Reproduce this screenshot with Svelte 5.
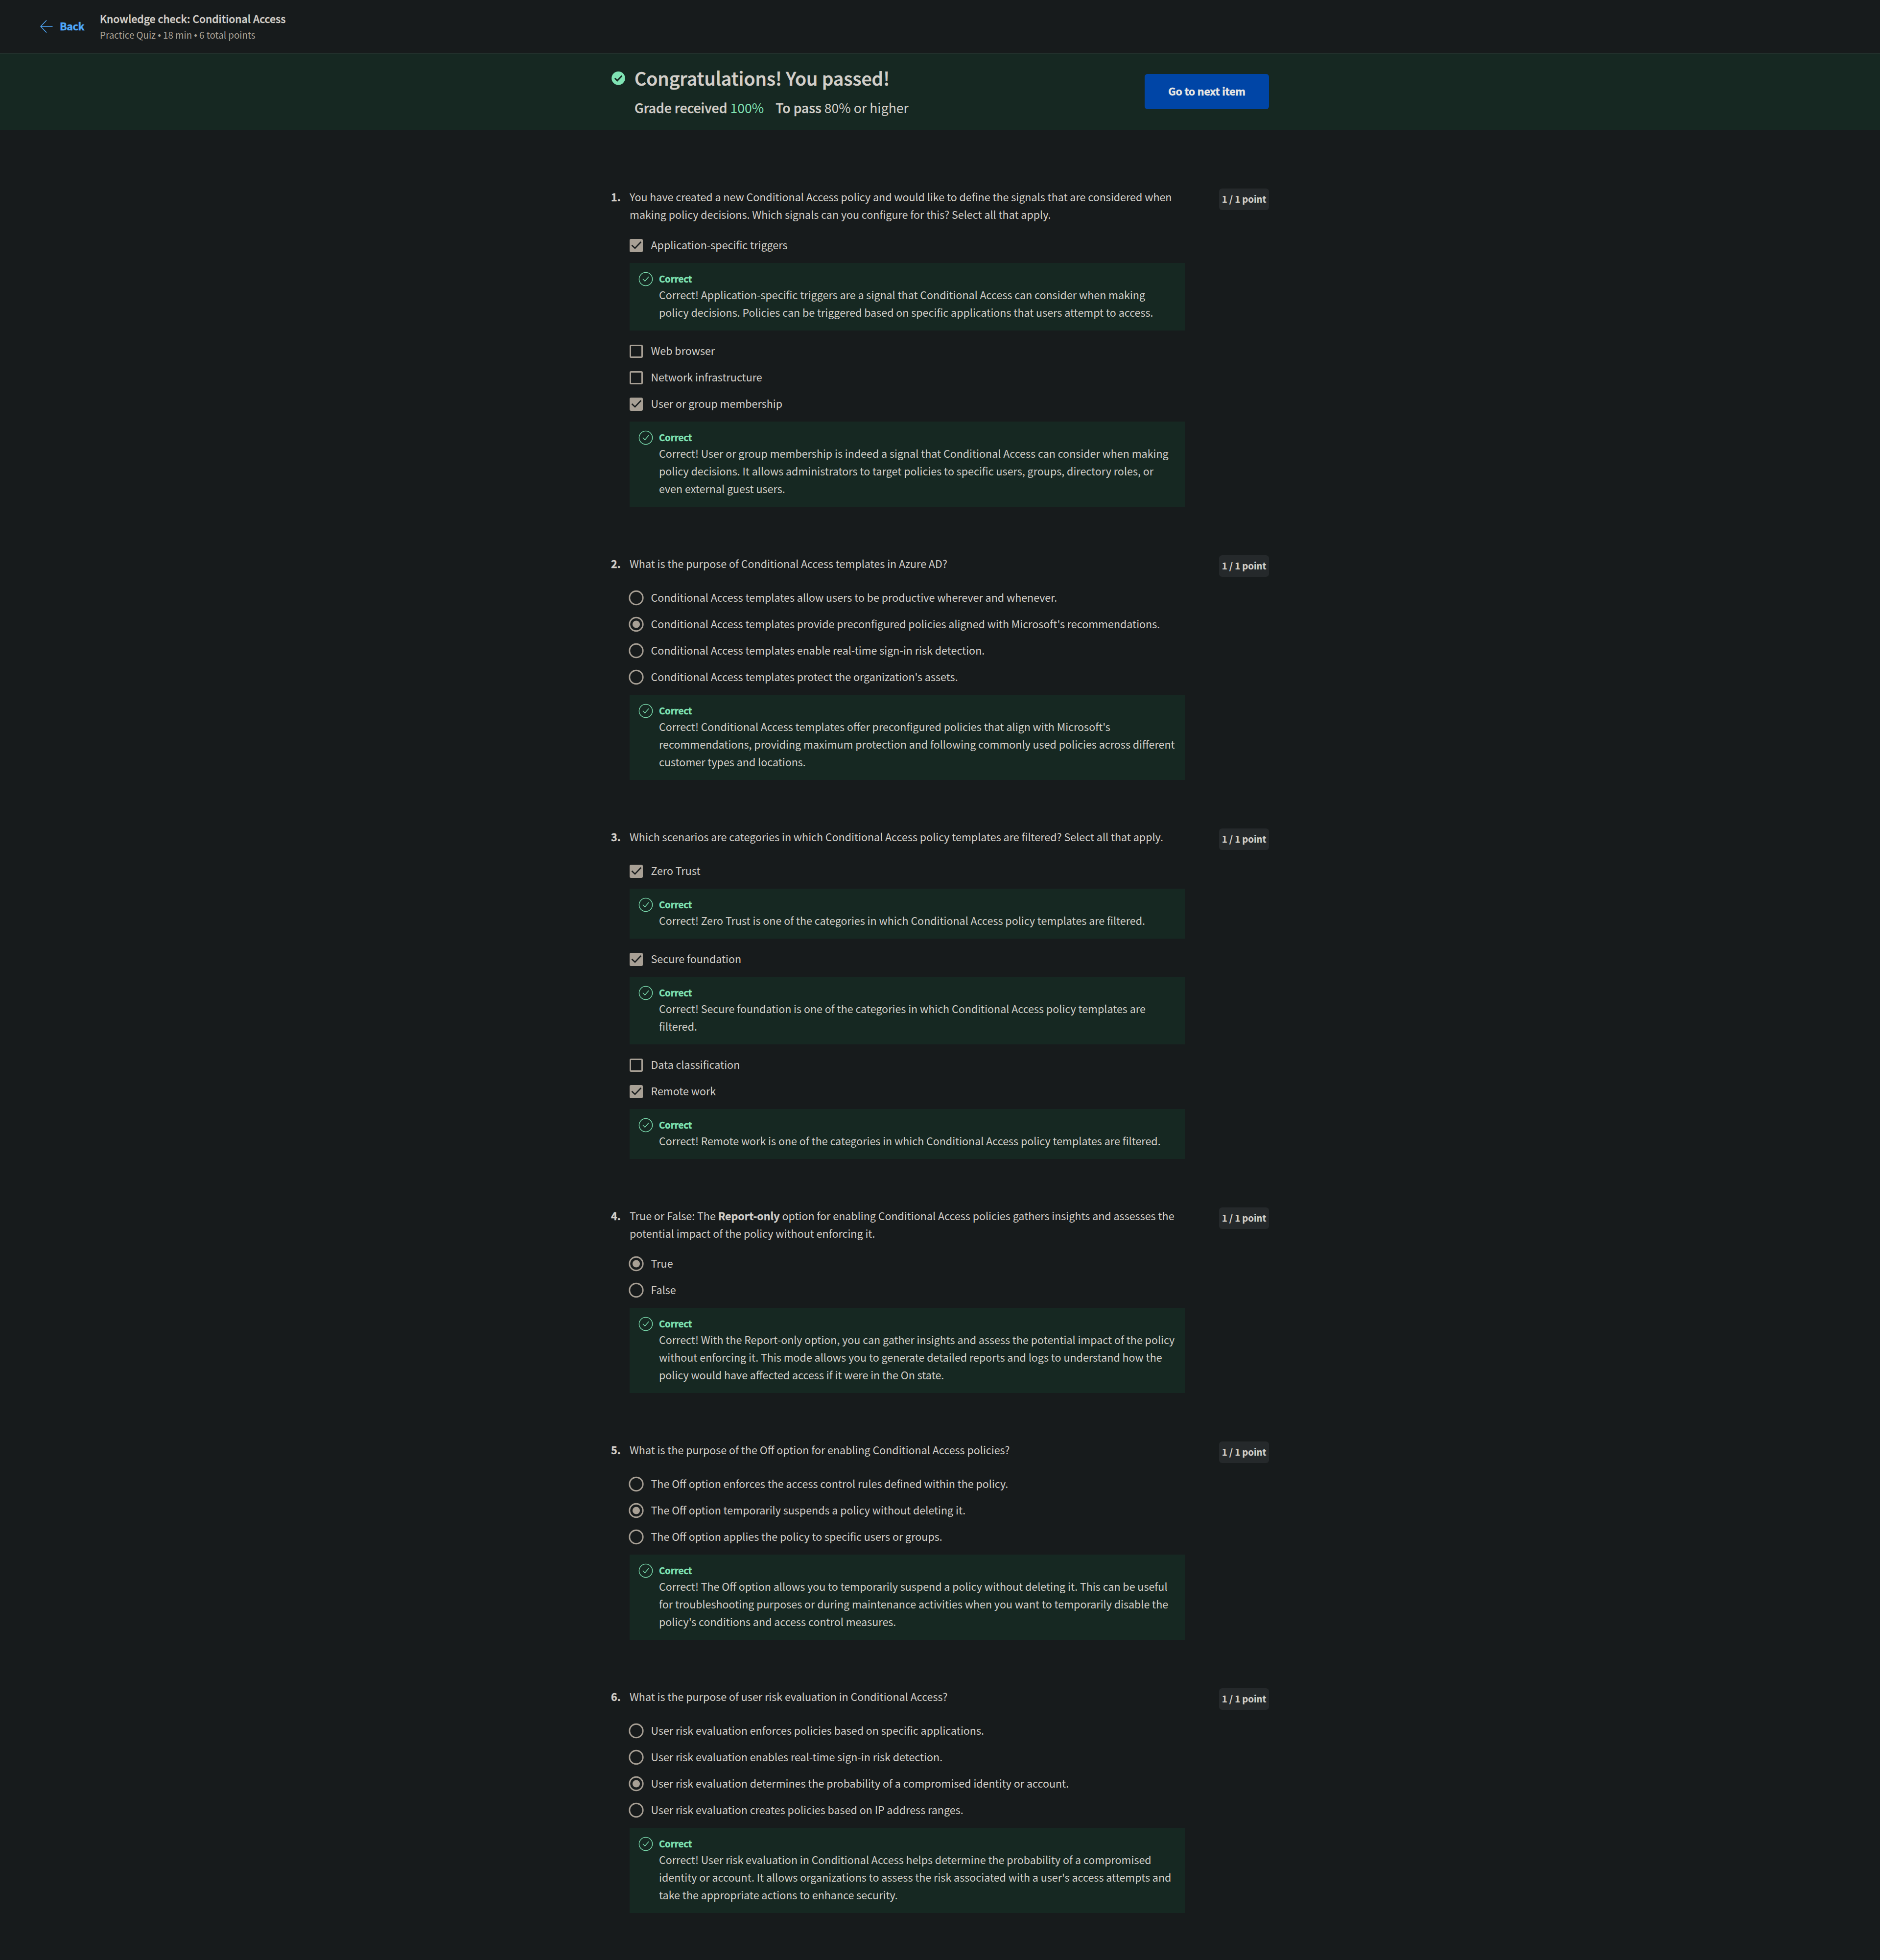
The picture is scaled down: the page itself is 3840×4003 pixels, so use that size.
<script>
  const questions = [
    {
      type: 'check',
      prompt: [{ t: 'You have created a new Conditional Access policy and would like to define the signals that are considered when making policy decisions. Which signals can you configure for this? Select all that apply.' }],
      options: [
        { label: 'Application-specific triggers', on: true, note: 'Correct! Application-specific triggers are a signal that Conditional Access can consider when making policy decisions. Policies can be triggered based on specific applications that users attempt to access.' },
        { label: 'Web browser' },
        { label: 'Network infrastructure' },
        { label: 'User or group membership', on: true, note: 'Correct! User or group membership is indeed a signal that Conditional Access can consider when making policy decisions. It allows administrators to target policies to specific users, groups, directory roles, or even external guest users.' }
      ]
    },
    {
      type: 'radio',
      prompt: [{ t: 'What is the purpose of Conditional Access templates in Azure AD?' }],
      options: [
        { label: 'Conditional Access templates allow users to be productive wherever and whenever.' },
        { label: "Conditional Access templates provide preconfigured policies aligned with Microsoft's recommendations.", on: true },
        { label: 'Conditional Access templates enable real-time sign-in risk detection.' },
        { label: "Conditional Access templates protect the organization's assets.", note: "Correct! Conditional Access templates offer preconfigured policies that align with Microsoft's recommendations, providing maximum protection and following commonly used policies across different customer types and locations." }
      ]
    },
    {
      type: 'check',
      prompt: [{ t: 'Which scenarios are categories in which Conditional Access policy templates are filtered? Select all that apply.' }],
      options: [
        { label: 'Zero Trust', on: true, note: 'Correct! Zero Trust is one of the categories in which Conditional Access policy templates are filtered.' },
        { label: 'Secure foundation', on: true, note: 'Correct! Secure foundation is one of the categories in which Conditional Access policy templates are filtered.' },
        { label: 'Data classification' },
        { label: 'Remote work', on: true, note: 'Correct! Remote work is one of the categories in which Conditional Access policy templates are filtered.' }
      ]
    },
    {
      type: 'radio',
      prompt: [{ t: 'True or False: The ' }, { t: 'Report-only', b: true }, { t: ' option for enabling Conditional Access policies gathers insights and assesses the potential impact of the policy without enforcing it.' }],
      options: [
        { label: 'True', on: true },
        { label: 'False', note: 'Correct! With the Report-only option, you can gather insights and assess the potential impact of the policy without enforcing it. This mode allows you to generate detailed reports and logs to understand how the policy would have affected access if it were in the On state.' }
      ]
    },
    {
      type: 'radio',
      prompt: [{ t: 'What is the purpose of the Off option for enabling Conditional Access policies?' }],
      options: [
        { label: 'The Off option enforces the access control rules defined within the policy.' },
        { label: 'The Off option temporarily suspends a policy without deleting it.', on: true },
        { label: 'The Off option applies the policy to specific users or groups.', note: "Correct! The Off option allows you to temporarily suspend a policy without deleting it. This can be useful for troubleshooting purposes or during maintenance activities when you want to temporarily disable the policy's conditions and access control measures." }
      ]
    },
    {
      type: 'radio',
      prompt: [{ t: 'What is the purpose of user risk evaluation in Conditional Access?' }],
      options: [
        { label: 'User risk evaluation enforces policies based on specific applications.' },
        { label: 'User risk evaluation enables real-time sign-in risk detection.' },
        { label: 'User risk evaluation determines the probability of a compromised identity or account.', on: true },
        { label: 'User risk evaluation creates policies based on IP address ranges.', note: "Correct! User risk evaluation in Conditional Access helps determine the probability of a compromised identity or account. It allows organizations to assess the risk associated with a user's access attempts and take the appropriate actions to enhance security." }
      ]
    }
  ];
</script>

<div class="page">
  <header>
    <a class="back" href="#back">
      <svg width="26" height="26" viewBox="0 0 26 26" fill="none" stroke="currentColor" stroke-width="1.5"><path d="M13 0.5L1 13L13 25.5M1 13H25.5" /></svg>
      <span>Back</span>
    </a>
    <div class="heading">
      <div class="name">Knowledge check: Conditional Access</div>
      <div class="meta">Practice Quiz <i>•</i> 18 min <i>•</i> 6 total points</div>
    </div>
  </header>

  <section class="banner">
    <div class="inner">
      <svg class="passed" width="28" height="28" viewBox="0 0 28 28"><circle cx="14" cy="13.8" r="13.8" fill="#7fe3b4" /><path d="M7 13.8L11.8 18.8L21.3 8.8" fill="none" stroke="#162822" stroke-width="3" /></svg>
      <div class="result">
        <h1>Congratulations! You passed!</h1>
        <p><span class="item"><b>Grade received</b> <span class="grade">100%</span></span><span class="item"><b>To pass</b> 80% or higher</span></p>
      </div>
      <button>Go to next item</button>
    </div>
  </section>

  <main>
    {#each questions as q, i}
      <article>
        <div class="num">{i + 1}.</div>
        <div class="body">
          <p class="prompt">{#each q.prompt as part}{#if part.b}<b>{part.t}</b>{:else}{part.t}{/if}{/each}</p>
          {#each q.options as o}
            <div class="option">
              {#if q.type === 'check'}
                <span class="box" class:on={o.on}>
                  {#if o.on}<svg width="22" height="18" viewBox="0 0 22 18" fill="none" stroke="#171b1c" stroke-width="2.6"><path d="M1.5 8.8L8 15L20.3 2" /></svg>{/if}
                </span>
              {:else}
                <svg class="radio" width="31" height="32" viewBox="0 0 31 32">
                  <circle cx="15.5" cy="16" r="13.7" fill="none" stroke="#a8a095" stroke-width="2.9" />
                  {#if o.on}<circle cx="15.5" cy="16" r="7.6" fill="#a8a095" />{/if}
                </svg>
              {/if}
              <span class="label">{o.label}</span>
            </div>
            {#if o.note}
              <div class="note">
                <svg width="30" height="30" viewBox="0 0 30 30" fill="none" stroke="#7fe3b4" stroke-width="1.4"><circle cx="15" cy="15" r="13.6" /><path d="M9 14.6L13.3 19.3L21 10.3" /></svg>
                <div class="text">
                  <div class="verdict">Correct</div>
                  <p>{o.note}</p>
                </div>
              </div>
            {/if}
          {/each}
        </div>
        <div class="points">1 / 1 point</div>
      </article>
    {/each}
  </main>
</div>

<style>
  :global(body) { margin: 0; background: #171b1c; }
  * { box-sizing: border-box; }
  .page {
    height: 4003px;
    overflow: hidden;
    background: #171b1c;
    color: #d3cfc9;
    font-family: "Noto Sans CJK SC", "Noto Sans", sans-serif;
    font-size: 21.49px;
    line-height: 36px;
  }
  h1, p { margin: 0; }
  header { height: 109px; border-bottom: 1px solid #4a4b4b; display: flex; padding-left: 82px; }
  .back { display: flex; align-items: center; width: 122px; gap: 14px; color: #4fa9fb; text-decoration: none; font-weight: 700; letter-spacing: -0.4px; -webkit-text-stroke: 0.5px currentColor; }
  .back span { padding-bottom: 2px; }
  .heading { padding-top: 22px; }
  .name { font-size: 21.25px; font-weight: 500; line-height: 31px; -webkit-text-stroke: 0.4px currentColor; }
  .meta { font-size: 18.8px; line-height: 36px; color: #a8a095; }
  .meta i { font-family: "Liberation Sans", sans-serif; font-style: normal; }
  .banner { height: 156px; background: #162822; }
  .inner { width: 1344px; margin: 0 auto; display: flex; }
  .passed { margin: 37px 0 0 1px; flex: none; }
  .result { margin-left: 19px; padding-top: 23px; flex: 1; }
  h1 { font-size: 37.5px; line-height: 54px; font-weight: 500; -webkit-text-stroke: 0.6px currentColor; }
  .result p { font-size: 26.6px; line-height: 36px; margin-top: 16px; }
  .result b { font-weight: 500; -webkit-text-stroke: 0.4px currentColor; }
  .item { margin-right: 24px; }
  .grade { color: #7fe3b4; }
  button { width: 254px; height: 72px; margin-top: 42px; padding: 0 0 2px; border: 0; border-radius: 6px; background: #0045a6; color: #e8e6e3; font: 700 21.49px/36px "Noto Sans CJK SC", sans-serif; letter-spacing: -0.18px; -webkit-text-stroke: 0.5px currentColor; }
  main { width: 1344px; margin: 0 auto; padding-top: 120px; }
  article { display: flex; margin-bottom: 74px; }
  article + article { margin-top: 75px; }
  article:not(:last-child) { margin-bottom: 0; }
  .num { width: 38px; margin-top: -1px; flex: none; font-weight: 700; -webkit-text-stroke: 0.4px currentColor; }
  .body { width: 1134px; flex: none; }
  .prompt { margin: -1px 0 26px; min-height: 44px; }
  article:first-child .prompt { margin-bottom: 27px; }
  .prompt b { -webkit-text-stroke: 0.3px currentColor; }
  .option { height: 36px; margin-bottom: 18px; display: flex; align-items: center; }
  .box { width: 27px; height: 27px; border: 3px solid #a8a095; border-radius: 3px; display: flex; align-items: center; justify-content: center; flex: none; }
  .box.on { background: #a8a095; }
  .box svg { flex: none; }
  .radio { margin: 0 -2px; flex: none; }
  .label { margin: -2px 0 0 16.5px; white-space: nowrap; }
  .note { display: flex; background: #162822; padding: 18px; margin-bottom: 24px; }
  .note svg { flex: none; }
  .text { margin: -1px 0 1px 12px; }
  .verdict { color: #7fe3b4; font-weight: 700; font-size: 18.8px; line-height: 30px; letter-spacing: -0.2px; -webkit-text-stroke: 0.4px currentColor; }
  .points { width: 102px; height: 44px; margin: 0 0 0 auto; border-radius: 6px; background: #25292b; font-size: 18.8px; line-height: 42px; font-weight: 700; text-align: center; white-space: nowrap; letter-spacing: -0.1px; -webkit-text-stroke: 0.2px currentColor; }
</style>
